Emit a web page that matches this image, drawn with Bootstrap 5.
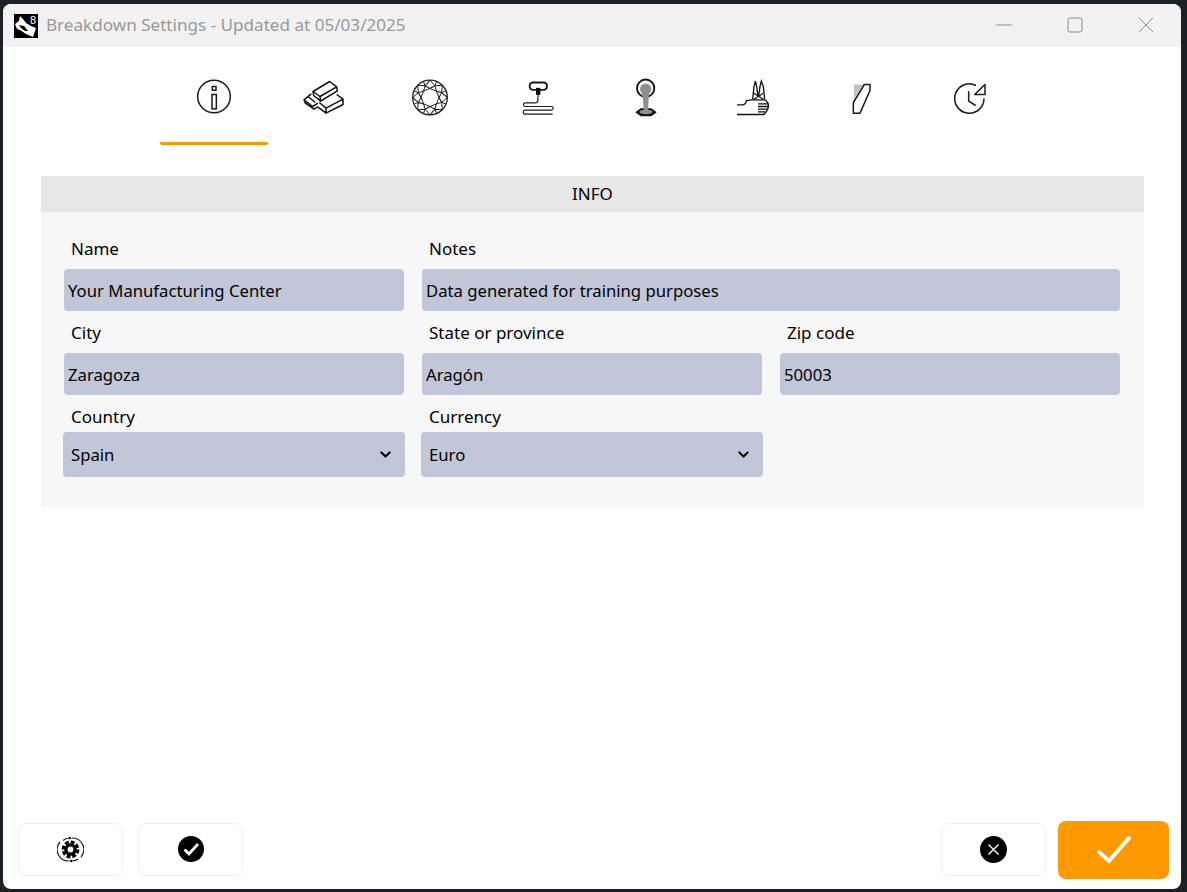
<!DOCTYPE html>
<html lang="en">
<head>
  <meta charset="UTF-8" />
  <meta name="viewport" content="width=device-width, initial-scale=1" />
  <title>Breakdown Settings</title>
  <link href="https://cdn.jsdelivr.net/npm/bootstrap@5.3.3/dist/css/bootstrap.min.css" rel="stylesheet" />
  <style>
    html, body { height: 100%; }
    body {
      background-color: #1d2024;
      font-family: "Noto Sans", "Open Sans", sans-serif;
      font-size: 17px;
      color: #000;
      padding: 4px 6px 3px 3px;
      overflow: hidden;
    }
    .app-window {
      height: 885px;
      background-color: #fff;
      border-radius: 8px;
      overflow: hidden;
    }
    .title-strip {
      height: 43px;
      background-color: #f2f2f2;
      padding: 0 0 2px 11px;
      color: #999;
      font-size: 17.1px;
      flex: none;
    }
    .title-logo { margin-right: 8px; margin-top: 2px; }
    .win-btn { width: 71px; height: 41px; }
    .tab-strip { padding-left: 157px; padding-top: 5px; }
    .tab-item {
      width: 108px;
      height: 93px;
      padding: 23px 0 0;
      border-bottom: 3px solid transparent;
      text-align: center;
    }
    .tab-item svg { display: block; margin: 0 auto; }
    .tab-item.is-active { border-bottom-color: #ff9900; border-radius: 0 0 2px 2px; }
    .info-panel {
      margin: 31px 37px 0 38px;
      background-color: #f7f7f7;
    }
    .info-head {
      height: 36px;
      line-height: 36px;
      background-color: #e7e7e7;
      text-align: center;
    }
    .info-body { padding: 26px 24px 30px 23px; }
    .info-body .row { --bs-gutter-x: 18px; --bs-gutter-y: 0; }
    .field-label {
      display: block;
      height: 22px;
      line-height: 22px;
      margin: 0 0 9px 7px;
    }
    .field-box {
      height: 42px;
      margin-bottom: 11px;
      padding: 0 4px;
      border: 0;
      border-radius: 4px;
      background-color: #c1c7d9;
      font-size: 16.7px;
      color: #000;
    }
    .field-pick {
      height: 45px;
      width: calc(100% + 2px);
      margin: -5px -1px 0;
      padding: 0 30px 0 8px;
      border: 0;
      border-radius: 4px;
      background-color: #c1c7d9;
      background-image: url("data:image/svg+xml,%3csvg xmlns='http://www.w3.org/2000/svg' viewBox='0 0 16 16'%3e%3cpath fill='none' stroke='%23000' stroke-linecap='round' stroke-linejoin='round' stroke-width='3' d='m2 5 6 6 6-6'/%3e%3c/svg%3e");
      background-size: 11px 11px;
      background-position: right 14px center;
      font-size: 16.7px;
      color: #000;
    }
    .action-strip { padding: 0 12px 10px 15px; }
    .ghost-btn {
      width: 105px;
      height: 53px;
      margin-bottom: 2px;
      padding: 0;
      background: #fff;
      border: 1px solid #efefef;
      border-radius: 8px;
    }
    .ghost-btn.pair-gap { margin-right: 15px; }
    .ok-btn {
      width: 111px;
      height: 58px;
      padding: 0;
      background-color: #ff9900;
      border: 0;
      border-radius: 8px;
    }
  </style>
</head>
<body>

<div class="app-window d-flex flex-column">

  <!-- TITLE BAR -->
  <div class="title-strip d-flex align-items-center">
    <svg class="title-logo" width="24" height="24" viewBox="0 0 24 24">
      <rect width="24" height="24" fill="#000"/>
      <path d="M1 10 L5 7 L6 2 L9 5 L12 9 L17 12 L22 14 L19 23 L12 20 L6 16 L3 15 Z" fill="#fff"/>
      <path d="M5 11 L10 12 L14 17 L11 17 L7 14 Z" fill="#000"/>
      <text x="16" y="10" font-size="11" fill="#fff" font-family="Liberation Sans, sans-serif">8</text>
    </svg>
    <span>Breakdown Settings - Updated at 05/03/2025</span>
    <div class="ms-auto d-flex">
      <div class="win-btn d-flex align-items-center justify-content-center">
        <svg width="16" height="16" viewBox="0 0 16 16"><path d="M0.5 8H15.5" stroke="#8c8c8c" stroke-width="1"/></svg>
      </div>
      <div class="win-btn d-flex align-items-center justify-content-center">
        <svg width="16" height="16" viewBox="0 0 16 16"><rect x="1" y="1" width="14" height="14" rx="2" fill="none" stroke="#8c8c8c" stroke-width="1"/></svg>
      </div>
      <div class="win-btn d-flex align-items-center justify-content-center">
        <svg width="16" height="16" viewBox="0 0 16 16"><path d="M1 1L15 15M15 1L1 15" stroke="#8c8c8c" stroke-width="1"/></svg>
      </div>
    </div>
  </div>

  <!-- TABS -->
  <div class="tab-strip d-flex">
    <div class="tab-item is-active">
      <svg width="54" height="45" viewBox="0 0 162 135"><g transform="translate(9,-13.5)" fill="none" stroke="#1a1a1a" stroke-width="4.5">
        <circle cx="72" cy="78" r="49"/>
        <rect x="67" y="48" width="11" height="11"/>
        <rect x="66" y="72" width="13" height="43"/>
      </g></svg>
    </div>
    <div class="tab-item">
      <svg width="54" height="45" viewBox="0 0 162 135"><g transform="translate(9,4.5)" fill="none" stroke="#111" stroke-width="4.5" stroke-linejoin="round">
        <path d="M45 45L95 15L116 31L66 60Z"/>
        <path d="M45 45L47 57L68 74L118 43L116 31M66 60L68 74"/>
        <path d="M116 54L135 68L84 95L64 78M84 95L84 110L135 84L135 68M84 110L60 92"/>
        <path d="M40 52L18 70L22 80L48 98L60 90M18 70L44 90L60 80M30 60L52 78"/>
      </g></svg>
    </div>
    <div class="tab-item">
      <svg width="54" height="45" viewBox="0 0 162 135"><defs>
        <path id="gem-cut" d="M0-27L19.1-19.1L14.5-35.1ZM0-27L14.5-35.1L0-52M14.5-35.1L36.8-36.8M14.5-35.1L19.9-48" fill="none" stroke="#222" stroke-width="3"/>
      </defs><g transform="translate(81,67.5)">
        <circle r="52" fill="none" stroke="#222" stroke-width="4"/>
        <use href="#gem-cut"/>
        <use href="#gem-cut" transform="rotate(45)"/>
        <use href="#gem-cut" transform="rotate(90)"/>
        <use href="#gem-cut" transform="rotate(135)"/>
        <use href="#gem-cut" transform="rotate(180)"/>
        <use href="#gem-cut" transform="rotate(225)"/>
        <use href="#gem-cut" transform="rotate(270)"/>
        <use href="#gem-cut" transform="rotate(315)"/>
      </g></svg>
    </div>
    <div class="tab-item">
      <svg width="54" height="45" viewBox="0 0 162 135"><g transform="translate(-333,-13.5)" fill="none" stroke="#1a1a1a">
        <rect x="389" y="36" width="52" height="22" rx="10" stroke-width="5.5"/>
        <rect x="408" y="52" width="13" height="21" fill="#000" stroke="none"/>
        <path d="M414 72V86Q414 97 404 97H376A5.5 5.5 0 0 0 376 108H454A5.5 5.5 0 0 1 454 119H376A6 6 0 0 0 376 131H458" stroke-width="3.5"/>
      </g></svg>
    </div>
    <div class="tab-item">
      <svg width="54" height="45" viewBox="0 0 162 135"><g transform="translate(3,-13.5)">
        <circle cx="77" cy="53" r="26" fill="none" stroke="#111" stroke-width="5.5"/>
        <path d="M46 125L62 113H94L110 125L94 137H62Z" fill="#111"/>
        <ellipse cx="78" cy="124" rx="20" ry="7" fill="#8f8f8f"/>
        <circle cx="77" cy="56" r="17" fill="#8f8f8f"/>
        <path d="M67 66H87L84 124H72Z" fill="#8f8f8f"/>
      </g></svg>
    </div>
    <div class="tab-item">
      <svg width="54" height="45" viewBox="0 0 162 135"><g transform="translate(15,4.5)" fill="none" stroke="#111" stroke-width="4">
        <path d="M62 68L66 30L70 14L74 30L78 60M98 68L94 30L88 14L84 30L80 60"/>
        <path d="M60 70H100M66 50L94 68M94 50L66 68" stroke-width="3.5"/>
        <path d="M15 85H32Q40 85 44 72L60 70M100 70L108 80Q112 92 104 104L96 114"/>
        <path d="M78 82H108M78 90H110M78 98H106M78 106H100M15 114H96"/>
      </g></svg>
    </div>
    <div class="tab-item">
      <svg width="54" height="45" viewBox="0 0 162 135"><g transform="translate(-15,-13.5)">
        <path d="M72 42H100L72 84Z" fill="#c2c2c2"/>
        <path d="M103 42H120V60L90 128H70V96Z" fill="none" stroke="#1a1a1a" stroke-width="4.5" stroke-linejoin="round"/>
      </g></svg>
    </div>
    <div class="tab-item">
      <svg width="54" height="45" viewBox="0 0 162 135"><g transform="translate(-339,-13.5)" fill="none" stroke="#1a1a1a" stroke-width="4.5">
        <path d="M462 84A44 44 0 1 1 438 45"/>
        <path d="M465 42V72H434Z" stroke-linejoin="round"/>
        <path d="M416 62V92L437 105"/>
      </g></svg>
    </div>
  </div>

  <!-- INFO PANEL -->
  <div class="info-panel">
    <div class="info-head">INFO</div>
    <div class="info-body">
      <div class="row">
        <div class="col-4">
          <label class="field-label" for="f-name">Name</label>
          <input id="f-name" class="form-control field-box" type="text" value="Your Manufacturing Center" />
        </div>
        <div class="col-8">
          <label class="field-label" for="f-notes">Notes</label>
          <input id="f-notes" class="form-control field-box" type="text" value="Data generated for training purposes" />
        </div>
        <div class="col-4">
          <label class="field-label" for="f-city">City</label>
          <input id="f-city" class="form-control field-box" type="text" value="Zaragoza" />
        </div>
        <div class="col-4">
          <label class="field-label" for="f-state">State or province</label>
          <input id="f-state" class="form-control field-box" type="text" value="Aragón" />
        </div>
        <div class="col-4">
          <label class="field-label" for="f-zip">Zip code</label>
          <input id="f-zip" class="form-control field-box" type="text" value="50003" />
        </div>
        <div class="col-4">
          <label class="field-label" for="f-country">Country</label>
          <select id="f-country" class="form-select field-pick"><option>Spain</option></select>
        </div>
        <div class="col-4">
          <label class="field-label" for="f-currency">Currency</label>
          <select id="f-currency" class="form-select field-pick"><option>Euro</option></select>
        </div>
      </div>
    </div>
  </div>

  <!-- BOTTOM ACTIONS -->
  <div class="action-strip mt-auto d-flex align-items-center">
    <button class="btn ghost-btn pair-gap d-flex align-items-center justify-content-center" type="button" aria-label="Settings">
      <svg width="27" height="27" viewBox="0 0 27 27">
        <path d="M6 4.5A11.5 11.5 0 0 1 12 2M15 2A11.5 11.5 0 0 1 24 21M21 23A11.5 11.5 0 0 1 15 25M12 25A11.5 11.5 0 0 1 3 6" fill="none" stroke="#222" stroke-width="1.2"/>
        <path d="M12 0.5L15 2L12 3.5ZM15 23.5L12 25L15 26.5Z" fill="#000"/>
        <circle cx="13.5" cy="13.5" r="7.4" fill="none" stroke="#000" stroke-width="3" stroke-dasharray="3.9 1.9"/>
        <circle cx="13.5" cy="13.5" r="4.6" fill="none" stroke="#000" stroke-width="3.4"/>
      </svg>
    </button>
    <button class="btn ghost-btn d-flex align-items-center justify-content-center" type="button" aria-label="Apply">
      <svg width="26" height="26" viewBox="0 0 26 26">
        <circle cx="13" cy="13" r="13" fill="#000"/>
        <path d="M6.5 13.5L11 18L20 8" fill="none" stroke="#fff" stroke-width="2.8"/>
      </svg>
    </button>
    <button class="btn ghost-btn ms-auto me-2 d-flex align-items-center justify-content-center" type="button" aria-label="Cancel">
      <svg width="27" height="27" viewBox="0 0 27 27">
        <circle cx="13.5" cy="13.5" r="13.5" fill="#000"/>
        <path d="M8.5 8.5L18.5 18.5M18.5 8.5L8.5 18.5" stroke="#e6e6e6" stroke-width="1.6"/>
      </svg>
    </button>
    <button class="btn ok-btn ms-1 d-flex align-items-center justify-content-center" type="button" aria-label="OK">
      <svg width="36" height="30" viewBox="0 0 36 30">
        <path d="M3 17L13 26L33 3" fill="none" stroke="#fff" stroke-width="4" stroke-linecap="round"/>
      </svg>
    </button>
  </div>

</div>

<script src="https://cdn.jsdelivr.net/npm/bootstrap@5.3.3/dist/js/bootstrap.bundle.min.js"></script>
</body>
</html>
